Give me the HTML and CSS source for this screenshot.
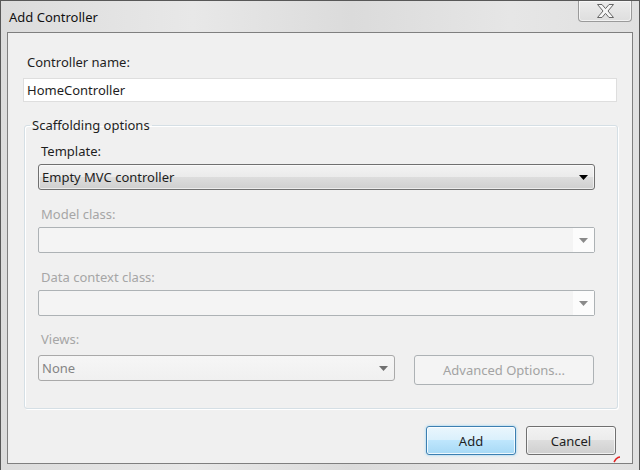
FILE: index.html
```html
<!DOCTYPE html>
<html>
<head>
<meta charset="utf-8">
<title>Add Controller</title>
<link rel="stylesheet" href="styles.css">
</head>
<body>
<div class="window">
  <div class="titlebar">
    <span class="title">Add Controller</span>
    <div class="close">
      <svg width="17" height="14" viewBox="0 0 17 14"><polygon points="0.5,0.5 5,0.5 8.5,4.6 12,0.5 16.5,0.5 11,7 16.5,13.5 12,13.5 8.5,9.4 5,13.5 0.5,13.5 6,7" fill="#f6f6f6" stroke="#666" stroke-width="1" stroke-linejoin="round"/></svg>
    </div>
  </div>
  <div class="client">
    <div class="label first">Controller name:</div>
    <div class="textbox">HomeController</div>
    <fieldset class="group">
      <legend class="legend">Scaffolding options</legend>
      <div class="field">
        <div class="label">Template:</div>
        <div class="combo combo-enabled">
          <span class="combo-text">Empty MVC controller</span>
          <span class="arrow-area"><svg width="9" height="5" viewBox="0 0 9 5"><polygon points="0,0 9,0 4.5,5" fill="#000"/></svg></span>
        </div>
      </div>
      <div class="field">
        <div class="label disabled">Model class:</div>
        <div class="combo combo-disabled">
          <span class="combo-text"></span>
          <span class="arrow-area light"><svg width="9" height="5" viewBox="0 0 9 5"><polygon points="0,0 9,0 4.5,5" fill="#8a8a8a"/></svg></span>
        </div>
      </div>
      <div class="field">
        <div class="label disabled">Data context class:</div>
        <div class="combo combo-disabled">
          <span class="combo-text"></span>
          <span class="arrow-area light"><svg width="9" height="5" viewBox="0 0 9 5"><polygon points="0,0 9,0 4.5,5" fill="#8a8a8a"/></svg></span>
        </div>
      </div>
      <div class="field views">
        <div class="label disabled">Views:</div>
        <div class="views-row">
          <div class="combo combo-disabled combo-views">
            <span class="combo-text none">None</span>
            <span class="arrow-area"><svg width="9" height="5" viewBox="0 0 9 5"><polygon points="0,0 9,0 4.5,5" fill="#707070"/></svg></span>
          </div>
          <div class="button button-disabled">Advanced Options...</div>
        </div>
      </div>
    </fieldset>
    <div class="buttons">
      <div class="button button-default">Add</div>
      <div class="button">Cancel</div>
    </div>
    <svg class="cursor-mark" width="8" height="8" viewBox="0 0 8 8"><path d="M1 7 L3 4 Q5 2 7 2" fill="none" stroke="#e02020" stroke-width="1.5"/></svg>
  </div>
</div>
</body>
</html>
```
FILE: styles.css
```css
html, body {
  margin: 0;
  padding: 0;
}
body {
  width: 640px;
  height: 470px;
  overflow: hidden;
  font-family: "Noto Sans", "Open Sans", sans-serif;
  font-size: 13px;
  color: #1e1e1e;
  background: #dcdcdc;
}
.window {
  box-sizing: border-box;
  width: 640px;
  height: 470px;
  border: 1px solid #585858;
  border-bottom: 0;
  background: linear-gradient(to right, #dcdcdc, #e8e8e8 30%, #dbdbdb 55%, #e6e6e6 80%, #e0e0e0);
  display: flex;
  flex-direction: column;
  padding: 0 6px 6px 6px;
}
.titlebar {
  height: 31px;
  display: flex;
  align-items: flex-start;
  flex-shrink: 0;
}
.title {
  margin-top: 7px;
  padding-left: 2px;
  line-height: 18px;
  color: #111;
}
.close {
  margin-left: auto;
  margin-right: 1px;
  width: 54px;
  height: 21px;
  box-sizing: border-box;
  border: 1px solid #9a9a9a;
  border-top: 0;
  border-radius: 0 0 4px 4px;
  background: linear-gradient(#ececec, #dedede);
  box-shadow: inset 0 0 0 1px rgba(255, 255, 255, 0.6);
  display: flex;
  align-items: center;
  justify-content: center;
}
.client {
  position: relative;
  flex: 1;
  border: 1px solid #7f7f7f;
  background: #f0f0f0;
  padding: 20px 15px 8px 15px;
  display: flex;
  flex-direction: column;
}
.label {
  line-height: 18px;
  margin-bottom: 4px;
  padding-left: 3px;
}
.label.first {
  margin-bottom: 7px;
  padding-left: 4px;
}
.label.disabled {
  color: #a6a6a6;
}
.textbox {
  box-sizing: border-box;
  height: 24px;
  border: 1px solid #dedede;
  background: #fff;
  padding: 0 3px;
  display: flex;
  align-items: center;
}
.group {
  margin: 14px -1px 0 1px;
  padding: 8px 22px 23px 13px;
  border: 1px solid #d5dfe5;
  border-radius: 3px;
  box-shadow: inset 1px 1px 0 #fff, 1px 1px 0 #fff;
  min-width: 0;
}
.legend {
  padding: 0 2px;
  margin-left: -8px;
  line-height: 18px;
}
.field {
  display: flex;
  flex-direction: column;
}
.field + .field {
  margin-top: 15px;
}
.field.views {
  margin-top: 14px;
}
.field.views .label {
  margin-bottom: 7px;
}
.combo {
  box-sizing: border-box;
  height: 26px;
  display: flex;
  align-items: center;
  padding-left: 3px;
  border-radius: 3px;
}
.combo-enabled {
  border: 1px solid #707070;
  background: linear-gradient(#f3f3f3, #ebebeb 50%, #dddddd 50%, #cfcfcf);
  box-shadow: inset 0 0 0 1px rgba(255, 255, 255, 0.6);
}
.combo-disabled {
  border: 1px solid #adb2b5;
  background: #f4f4f4;
  border-radius: 2px;
}
.combo-text {
  flex: 1;
  white-space: nowrap;
}
.combo-text.none {
  color: #858585;
}
.arrow-area {
  width: 21px;
  height: 100%;
  display: flex;
  align-items: center;
  justify-content: center;
  flex-shrink: 0;
}
.arrow-area.light {
  background: #fcfcfc;
}
.views-row {
  display: flex;
  align-items: flex-start;
}
.combo-views {
  width: 357px;
  border-radius: 3px;
  border-color: #a9a9a9;
  background: linear-gradient(#f6f6f6, #f0f0f0);
}
.button {
  box-sizing: border-box;
  width: 90px;
  height: 29px;
  border: 1px solid #707070;
  border-radius: 3px;
  display: flex;
  align-items: center;
  justify-content: center;
  background: linear-gradient(#f2f2f2, #ebebeb 50%, #dddddd 50%, #cfcfcf);
  box-shadow: inset 0 0 0 1px rgba(255, 255, 255, 0.7);
  color: #1e1e1e;
}
.button-disabled {
  width: 180px;
  height: 30px;
  margin-left: 19px;
  border-color: #adb2b5;
  background: #f4f4f4;
  color: #a3a3a3;
  box-shadow: none;
}
.buttons {
  margin-top: 17px;
  margin-right: 1px;
  display: flex;
  justify-content: flex-end;
  gap: 10px;
}
.button-default {
  border-color: #3c7fb1;
  background: linear-gradient(#eaf6fd, #d9f0fc 50%, #bee6fd 50%, #a7d9f5);
  box-shadow: inset 0 0 0 1px rgba(255, 255, 255, 0.8), 0 0 3px #8fd0f2;
}
.cursor-mark {
  position: absolute;
  right: 11px;
  bottom: 0;
}
```
